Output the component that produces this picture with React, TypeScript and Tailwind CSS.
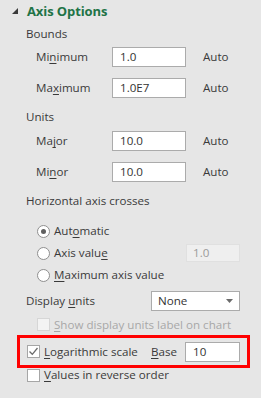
import React from "react";

const font = { fontFamily: '"Open Sans", "Noto Sans", sans-serif' };

const U: React.FC<{ children: React.ReactNode }> = ({ children }) => (
  <span className="underline underline-offset-2">{children}</span>
);

const TextBox: React.FC<{ value: string; className?: string }> = ({ value, className }) => (
  <div
    className={`h-[20px] border border-[#ababab] bg-white flex items-center pl-[7px] text-[#333] ${className ?? ""}`}
  >
    {value}
  </div>
);

const Radio: React.FC<{ checked?: boolean }> = ({ checked }) => (
  <div className="w-[13px] h-[13px] rounded-full border border-[#8f8f8f] bg-white flex items-center justify-center">
    {checked && <div className="w-[5px] h-[5px] rounded-full bg-[#5f5f5f]" />}
  </div>
);

const Checkbox: React.FC<{ checked?: boolean; disabled?: boolean }> = ({ checked, disabled }) => (
  <div
    className={`w-[13px] h-[13px] border flex items-center justify-center ${
      disabled ? "border-[#d6d6d6] bg-[#f3f3f3]" : "border-[#a6a6a6] bg-white"
    }`}
  >
    {checked && (
      <svg width="11" height="11" viewBox="0 0 11 11">
        <path d="M1.5 5.5 L4.3 8.3 L9.5 2" fill="none" stroke="#6b6b6b" strokeWidth="1.3" />
      </svg>
    )}
  </div>
);

export default function App() {
  return (
    <div className="w-[261px] h-[398px] bg-[#e6e6e6] text-[11.6px] text-[#3a3a3a] overflow-hidden" style={font}>
      {/* Header */}
      <div className="h-[24px] flex items-center pl-[12px]">
        <svg width="6" height="6" viewBox="0 0 6 6" className="mr-[9px] mt-[-2px]">
          <path d="M6 0 L6 6 L0 6 Z" fill="#3a3a3a" />
        </svg>
        <span className="text-[13px] font-bold text-[#217346] tracking-[-0.1px]">Axis Options</span>
      </div>

      {/* Bounds */}
      <div className="h-[20px] flex items-center pl-[26px]">Bounds</div>
      <div className="mt-[3px] h-[20px] flex items-center pl-[36px]">
        <span className="w-[76px]">
          Mi<U>n</U>imum
        </span>
        <TextBox value="1.0" className="w-[74px]" />
        <span className="ml-[17px]">Auto</span>
      </div>
      <div className="mt-[11px] h-[20px] flex items-center pl-[36px]">
        <span className="w-[76px]">
          Ma<U>x</U>imum
        </span>
        <TextBox value="1.0E7" className="w-[74px]" />
        <span className="ml-[17px]">Auto</span>
      </div>

      {/* Units */}
      <div className="mt-[9px] h-[20px] flex items-center pl-[26px]">Units</div>
      <div className="mt-[4px] h-[20px] flex items-center pl-[36px]">
        <span className="w-[76px]">
          Ma<U>j</U>or
        </span>
        <TextBox value="10.0" className="w-[74px]" />
        <span className="ml-[17px]">Auto</span>
      </div>
      <div className="mt-[11px] h-[20px] flex items-center pl-[36px]">
        <span className="w-[76px]">
          Mi<U>n</U>or
        </span>
        <TextBox value="10.0" className="w-[74px]" />
        <span className="ml-[17px]">Auto</span>
      </div>

      {/* Horizontal axis crosses */}
      <div className="mt-[9px] h-[20px] flex items-center pl-[26px]">Horizontal axis crosses</div>
      <div className="mt-[9px] h-[22px] flex items-center pl-[37px] gap-[4px]">
        <Radio checked />
        <span>
          Aut<U>o</U>matic
        </span>
      </div>
      <div className="h-[22px] flex items-center pl-[37px] gap-[4px]">
        <Radio />
        <span className="flex-1">
          Axis valu<U>e</U>
        </span>
        <div className="mr-[21px] w-[54px] h-[18px] border border-[#e0e0e0] bg-[#efefef] flex items-center pl-[6px] text-[#9a9a9a]">
          1.0
        </div>
      </div>
      <div className="h-[22px] flex items-center pl-[37px] gap-[4px]">
        <Radio />
        <span>
          <U>M</U>aximum axis value
        </span>
      </div>

      {/* Display units */}
      <div className="mt-[5px] h-[20px] flex items-center pl-[26px]">
        <span className="w-[125px]">
          Display <U>u</U>nits
        </span>
        <div className="w-[89px] h-[20px] border border-[#ababab] bg-white flex items-center justify-between pl-[6px] pr-[6px] text-[#333]">
          <span>None</span>
          <svg width="7" height="4" viewBox="0 0 7 4">
            <path d="M0 0 L7 0 L3.5 4 Z" fill="#6b6b6b" />
          </svg>
        </div>
      </div>
      <div className="mt-[3px] h-[21px] flex items-center pl-[37px] gap-[4px] text-[#a8a8a8]">
        <Checkbox disabled />
        <span>
          <U>S</U>how display units label on chart
        </span>
      </div>

      {/* Highlighted row */}
      <div className="ml-[17px] w-[233px] h-[33px] border-[3px] border-[#ff0000] flex items-center pl-[7px]">
        <Checkbox checked />
        <span className="ml-[4px] w-[107px]">
          <U>L</U>ogarithmic scale
        </span>
        <span className="w-[34px]">
          <U>B</U>ase
        </span>
        <TextBox value="10" className="w-[55px] h-[19px]" />
      </div>

      <div className="h-[14px] flex items-center pl-[27px] gap-[4px]">
        <Checkbox />
        <span>
          <U>V</U>alues in reverse order
        </span>
      </div>
    </div>
  );
}
